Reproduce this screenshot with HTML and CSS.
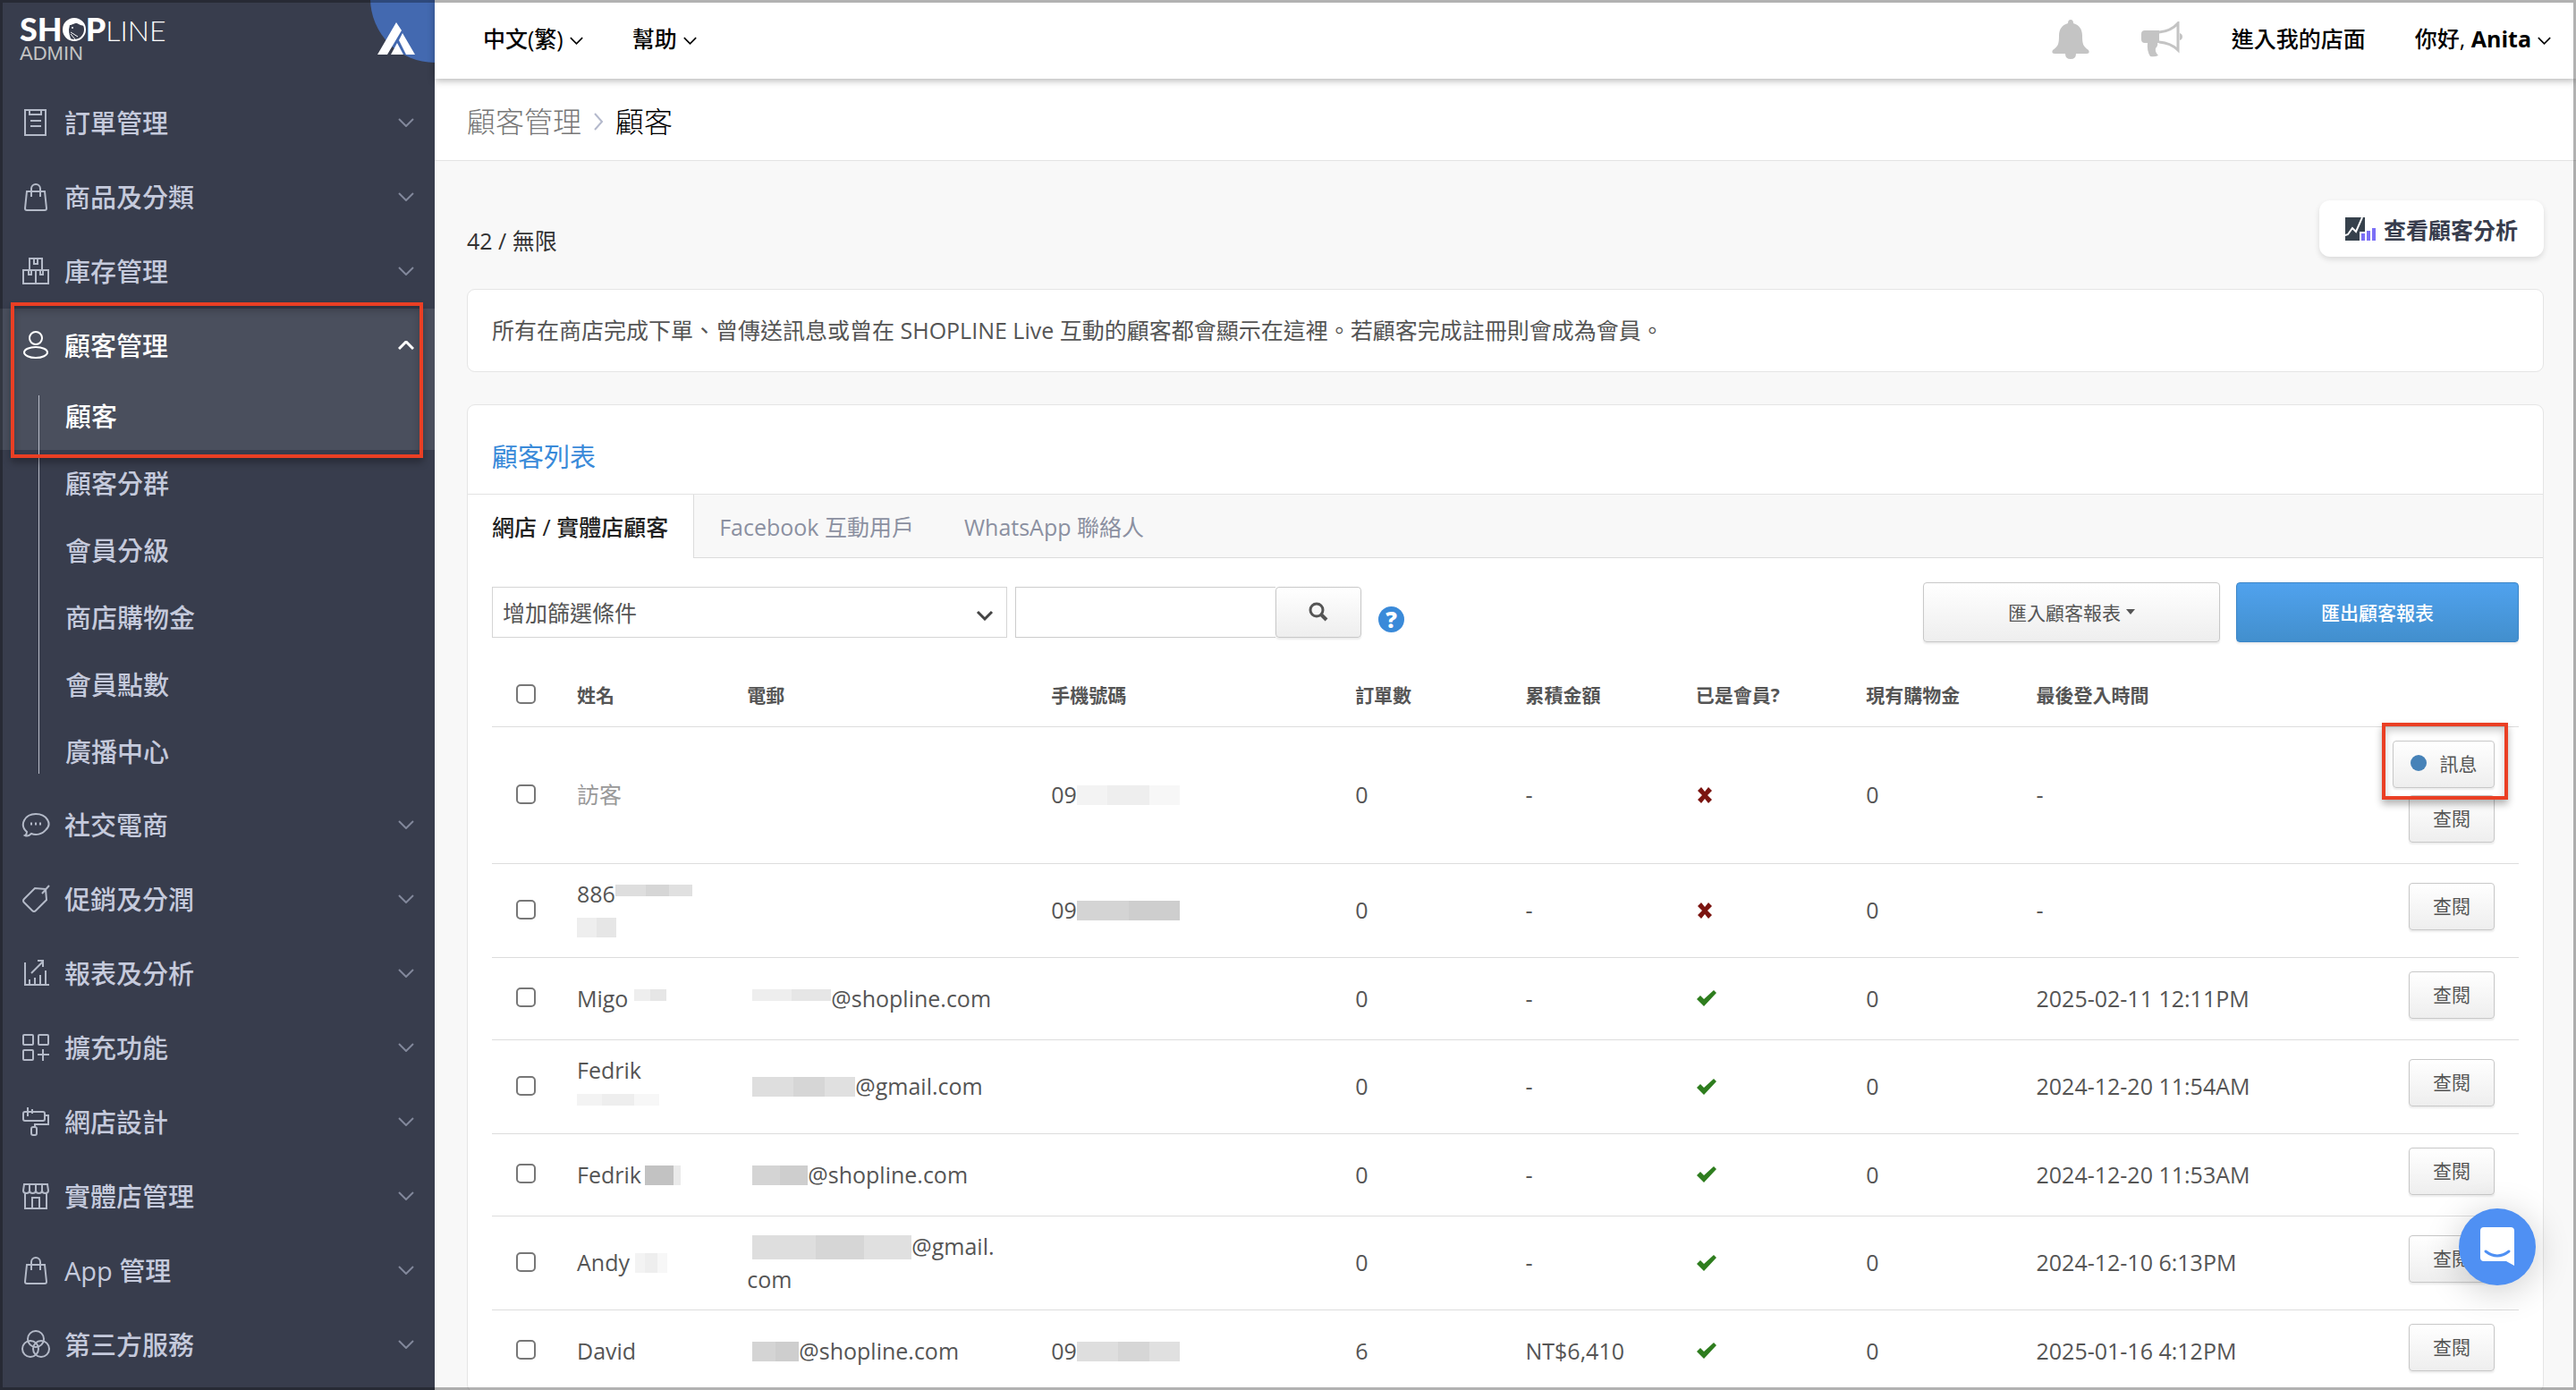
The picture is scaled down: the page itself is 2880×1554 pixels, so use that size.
FILE: index.html
```html
<!DOCTYPE html>
<html lang="zh-Hant">
<head>
  <meta charset="UTF-8" />
  <meta name="viewport" content="width=device-width, initial-scale=1.0"/>
  <title>SHOPLINE Admin - 顧客</title>
  <link rel="stylesheet" href="styles.css">
</head>
<body>
  <svg class="sprite" aria-hidden="true">
    <symbol id="down" viewBox="0 0 18 10"><path d="M1 1l8 8 8-8" fill="none" stroke="currentColor" stroke-width="2"/></symbol>
    <symbol id="up" viewBox="0 0 18 10"><path d="M1 9l8-8 8 8" fill="none" stroke="currentColor" stroke-width="3"/></symbol>
    <symbol id="bag" viewBox="0 0 32 32"><path d="M6 10h20l2 19a2 2 0 0 1-2 2H6a2 2 0 0 1-2-2zM11 16V7a5 5 0 0 1 10 0v9"/></symbol>
    <symbol id="check" viewBox="0 0 24 20"><path d="M1 11l4-4 4 4L20 1l3 3L9 19z" fill="currentColor"/></symbol>
    <symbol id="cross" viewBox="0 0 20 20"><path d="M2 5l4-4 4 5 4-5 4 4-5 5 5 5-4 4-4-5-4 5-4-4 5-5z" fill="currentColor"/></symbol>
  </svg>

  <div class="app">
    <aside class="sidebar">
      <div class="brand">
        <div class="logo">
          <div class="logo-name">
            <b>SH</b>
            <svg class="logo-o" viewBox="0 0 26 26"><circle cx="13" cy="13" r="12" fill="none" stroke="#fff" stroke-width="2"/><path d="M13 1C5 1 1 7 1 13s4 11 9 12c-2-4-3-8-3-12l1-5c3 0 4-2 8-2l4 2 4 1C22 4 18 1 13 1z" fill="#fff"/><path d="M9 16l8 5M9 18l5 6" stroke="#fff"/><circle cx="11" cy="11" r="1" fill="#fff"/></svg>
            <b>P</b><span>LINE</span>
          </div>
          <div class="logo-sub">ADMIN</div>
        </div>
        <div class="badge">
          <svg viewBox="0 0 42 36"><path d="M21 0l6 9L11 36H0zM28 12l14 24H32l-8-16zM22 23l7 13H15z" fill="#fff"/></svg>
        </div>
      </div>

      <nav>
        <a class="item" href="#"><svg class="icon" viewBox="0 0 32 32"><path d="M4 2h23v28H4zM9 2v5h13V2M10 14h12M10 20h12"/></svg>訂單管理<svg class="arrow"><use href="#down"/></svg></a>
        <a class="item" href="#"><svg class="icon"><use href="#bag"/></svg>商品及分類<svg class="arrow"><use href="#down"/></svg></a>
        <a class="item" href="#"><svg class="icon" viewBox="0 0 32 32"><path d="M9 15V2h14v13M2 15h28v15H2zM16 15v15M14 3v5h4V3M8 16v4h3v-4M21 16v4h3v-4"/></svg>庫存管理<svg class="arrow"><use href="#down"/></svg></a>

        <div class="group">
          <a class="item active" href="#"><svg class="icon" viewBox="0 0 32 32"><circle cx="16" cy="8" r="7"/><ellipse cx="16" cy="24" rx="13" ry="6"/></svg>顧客管理<svg class="arrow"><use href="#up"/></svg></a>
          <div class="sub">
            <a class="active" href="#">顧客</a>
            <a href="#">顧客分群</a>
            <a href="#">會員分級</a>
            <a href="#">商店購物金</a>
            <a href="#">會員點數</a>
            <a href="#">廣播中心</a>
          </div>
          <div class="highlight highlight-menu"></div>
        </div>

        <a class="item" href="#"><svg class="icon" viewBox="0 0 32 32"><path d="M6 24C-3 16 4 4 16 4s19 11 11 18c-4 5-11 6-16 4-2 2-5 3-7 2 2-1 2-3 2-4z"/><path d="M10 15h2M15 15h2M20 15h2" stroke-width="3"/></svg>社交電商<svg class="arrow"><use href="#down"/></svg></a>
        <a class="item" href="#"><svg class="icon" viewBox="0 0 32 32"><path d="M27 5L15 4 3 16q-2 2 0 4l9 9q2 2 4 0l12-12-1-12M31 1l-8 9"/></svg>促銷及分潤<svg class="arrow"><use href="#down"/></svg></a>
        <a class="item" href="#"><svg class="icon" viewBox="0 0 32 32"><path d="M4 4v25h27M9 29v-6M15 29v-8M21 29V18M27 29V13M11 16L24 3M18 2h6v7"/></svg>報表及分析<svg class="arrow"><use href="#down"/></svg></a>
        <a class="item" href="#"><svg class="icon" viewBox="0 0 32 32"><rect x="2" y="2" width="11" height="11" rx="1"/><rect x="19" y="2" width="11" height="11" rx="1"/><rect x="2" y="19" width="11" height="11" rx="1"/><path d="M18 24h13M24 18v13"/></svg>擴充功能<svg class="arrow"><use href="#down"/></svg></a>
        <a class="item" href="#"><svg class="icon" viewBox="0 0 32 32"><rect x="2" y="5" width="24" height="10" rx="2"/><path d="M7 0v10M12 2v5M26 9h4v10H15v3"/><rect x="11" y="22" width="6" height="9" rx="2"/></svg>網店設計<svg class="arrow"><use href="#down"/></svg></a>
        <a class="item" href="#"><svg class="icon" viewBox="0 0 32 32"><path d="M3 3h26l1 7c0 4-7 4-7 0 0 4-7 4-7 0 0 4-7 4-7 0 0 4-7 4-7 0zM9 3v7M16 3v7M23 3v7M4 13v17h24V13M12 30V18h8v12"/></svg>實體店管理<svg class="arrow"><use href="#down"/></svg></a>
        <a class="item" href="#"><svg class="icon"><use href="#bag"/></svg>App 管理<svg class="arrow"><use href="#down"/></svg></a>
        <a class="item" href="#"><svg class="icon" viewBox="0 0 32 32"><circle cx="16" cy="10" r="9"/><circle cx="10" cy="21" r="9"/><circle cx="22" cy="21" r="9"/></svg>第三方服務<svg class="arrow"><use href="#down"/></svg></a>
      </nav>
    </aside>

    <main class="main">
      <header class="topbar">
        <a href="#">中文(繁)<svg class="caret"><use href="#down"/></svg></a>
        <a href="#">幫助<svg class="caret"><use href="#down"/></svg></a>
        <div class="spacer"></div>
        <a class="bell" href="#" aria-label="通知"><svg width="42" height="44" viewBox="0 0 42 44"><path d="M18 4q0-4 3-4t3 4c7 2 10 7 10 14 0 9 1 12 7 16q2 4-2 4H3q-4 0-2-4c6-4 7-7 7-16 0-7 3-12 10-14z"/><path d="M15 38h12q0 6-6 6t-6-6"/></svg></a>
        <a class="horn" href="#" aria-label="公告"><svg width="46" height="40" viewBox="0 0 46 40"><path d="M20 10H4q-4 0-4 4v6q0 4 4 4h3q-1 9 3 15 5 1 9-1-4-4-3-8 3-3 2-6h2z"/><path d="M20 12q13-1 21-10v30q-8-8-21-9" fill="none" stroke="#c4c4c4" stroke-width="3"/><path d="M43 13q3 1 3 4t-3 4z"/></svg></a>
        <a href="#">進入我的店面</a>
        <a href="#">你好, <b>Anita</b><svg class="caret"><use href="#down"/></svg></a>
      </header>

      <div class="breadcrumb">
        <a href="#">顧客管理</a>
        <svg width="12" height="20" viewBox="0 0 12 20"><path d="M2 1l8 9-8 9" fill="none" stroke="#b4b9cc" stroke-width="2"/></svg>
        <span>顧客</span>
      </div>

      <div class="content">
        <div class="summary">
          <div class="count">42 / 無限</div>
          <button class="analysis">
            <svg width="34" height="26" viewBox="0 0 34 26"><path d="M0 0h22v16h-6v10H0z" fill="#36414c"/><path d="M0 20l3-1 5-7 4 4 7-16" fill="none" stroke="#fff" stroke-width="2"/><path d="M18 18h4v8h-4zM24 15h4v11h-4zM30 12h4v14h-4z" fill="#7b6ff6"/></svg>
            查看顧客分析
          </button>
        </div>

        <div class="notice">所有在商店完成下單、曾傳送訊息或曾在 SHOPLINE Live 互動的顧客都會顯示在這裡。若顧客完成註冊則會成為會員。</div>

        <section class="card">
          <h2>顧客列表</h2>
          <div class="tabs">
            <a class="active" href="#">網店 / 實體店顧客</a>
            <a href="#">Facebook 互動用戶</a>
            <a href="#">WhatsApp 聯絡人</a>
          </div>

          <div class="toolbar">
            <div class="select-wrap">
              <select aria-label="增加篩選條件"><option>增加篩選條件</option></select>
              <svg width="20" height="12" viewBox="0 0 20 12"><path d="M2 2l8 8 8-8" fill="none" stroke="#444" stroke-width="3"/></svg>
            </div>
            <input class="search" type="text" aria-label="搜尋">
            <button class="btn search-btn" aria-label="搜尋"><svg width="22" height="22" viewBox="0 0 22 22"><circle cx="9" cy="9" r="7" fill="none" stroke="#555" stroke-width="3"/><path d="M14 14l6 6" stroke="#555" stroke-width="4"/></svg></button>
            <a class="help" href="#">?</a>
            <div class="spacer"></div>
            <button class="btn import">匯入顧客報表<i class="tri"></i></button>
            <button class="btn primary">匯出顧客報表</button>
          </div>

          <table>
            <colgroup>
              <col class="c-check"><col class="c-s"><col class="c-l"><col class="c-l"><col class="c-s"><col class="c-s"><col class="c-s"><col class="c-s"><col><col class="c-action">
            </colgroup>
            <thead>
              <tr>
                <th><input type="checkbox" aria-label="全選"></th>
                <th>姓名</th><th>電郵</th><th>手機號碼</th><th>訂單數</th><th>累積金額</th><th>已是會員?</th><th>現有購物金</th><th>最後登入時間</th><th></th>
              </tr>
            </thead>
            <tbody>
              <tr>
                <td><input type="checkbox" aria-label="選取"></td>
                <td class="guest">訪客</td>
                <td></td>
                <td>09<i class="mask w115 faint"></i></td>
                <td>0</td><td>-</td>
                <td><svg class="no"><use href="#cross"/></svg></td>
                <td>0</td><td>-</td>
                <td class="actions">
                  <div class="msg"><button class="btn small"><i class="dot"></i>訊息</button><div class="highlight highlight-msg"></div></div>
                  <button class="btn small">查閱</button>
                </td>
              </tr>
              <tr>
                <td><input type="checkbox" aria-label="選取"></td>
                <td>886<i class="mask w86 thin"></i><br><i class="mask w44 light"></i></td>
                <td></td>
                <td>09<i class="mask w115 dark"></i></td>
                <td>0</td><td>-</td>
                <td><svg class="no"><use href="#cross"/></svg></td>
                <td>0</td><td>-</td>
                <td class="actions"><button class="btn small">查閱</button></td>
              </tr>
              <tr>
                <td><input type="checkbox" aria-label="選取"></td>
                <td>Migo <i class="mask w36 thin light"></i></td>
                <td class="mail"><i class="mask w88 thin light"></i>@shopline.com</td>
                <td></td>
                <td>0</td><td>-</td>
                <td><svg class="yes"><use href="#check"/></svg></td>
                <td>0</td><td>2025-02-11 12:11PM</td>
                <td class="actions"><button class="btn small">查閱</button></td>
              </tr>
              <tr>
                <td><input type="checkbox" aria-label="選取"></td>
                <td>Fedrik<br><i class="mask w92 thin faint"></i></td>
                <td class="mail"><i class="mask w115"></i>@gmail.com</td>
                <td></td>
                <td>0</td><td>-</td>
                <td><svg class="yes"><use href="#check"/></svg></td>
                <td>0</td><td>2024-12-20 11:54AM</td>
                <td class="actions"><button class="btn small">查閱</button></td>
              </tr>
              <tr>
                <td><input type="checkbox" aria-label="選取"></td>
                <td>Fedrik<i class="mask w40 gap darker"></i></td>
                <td class="mail"><i class="mask w62 dark"></i>@shopline.com</td>
                <td></td>
                <td>0</td><td>-</td>
                <td><svg class="yes"><use href="#check"/></svg></td>
                <td>0</td><td>2024-12-20 11:53AM</td>
                <td class="actions"><button class="btn small">查閱</button></td>
              </tr>
              <tr>
                <td><input type="checkbox" aria-label="選取"></td>
                <td>Andy <i class="mask w36 faint"></i></td>
                <td class="mail"><i class="mask w178 tall"></i>@gmail.<br>com</td>
                <td></td>
                <td>0</td><td>-</td>
                <td><svg class="yes"><use href="#check"/></svg></td>
                <td>0</td><td>2024-12-10 6:13PM</td>
                <td class="actions"><button class="btn small">查閱</button></td>
              </tr>
              <tr>
                <td><input type="checkbox" aria-label="選取"></td>
                <td>David</td>
                <td class="mail"><i class="mask w52 dark"></i>@shopline.com</td>
                <td>09<i class="mask w115"></i></td>
                <td>6</td><td>NT$6,410</td>
                <td><svg class="yes"><use href="#check"/></svg></td>
                <td>0</td><td>2025-01-16 4:12PM</td>
                <td class="actions"><button class="btn small">查閱</button></td>
              </tr>
            </tbody>
          </table>
        </section>
      </div>
    </main>
  </div>

  <button class="chat" aria-label="客服"><svg width="40" height="44" viewBox="0 0 40 44"><path d="M5 0h30q4 0 4 4v39l-9-5H5q-4 0-4-4V4q0-4 4-4z" fill="#fff"/><path d="M7 27q13 10 26 0" fill="none" stroke="#4f90f3" stroke-width="3" stroke-linecap="round"/></svg></button>
  <div class="frame"></div>
</body>
</html>
```

FILE: styles.css
```css
* {
  box-sizing: border-box;
}

body {
  margin: 0;
  font-family: "Open Sans", "Noto Sans CJK TC", sans-serif;
  font-size: 25px;
  line-height: 37px;
  color: #555;
  background: #f8f8f8;
  overflow: hidden;
}

a {
  color: inherit;
  text-decoration: none;
}

button,
input,
select {
  font-family: inherit;
  color: inherit;
}

.sprite {
  display: none;
}

.spacer {
  flex: 1;
}

.app {
  display: flex;
  height: 100vh;
  overflow: hidden;
}

/* sidebar */
.sidebar {
  flex: 0 0 486px;
  background: #383d4d;
  color: #c5cadc;
  overflow: hidden;
}

.brand {
  position: relative;
  height: 96px;
  padding: 14px 22px;
  overflow: hidden;
}

.logo-name {
  display: flex;
  align-items: baseline;
  height: 36px;
  color: #fff;
  font-family: Lato, sans-serif;
  font-size: 36px;
  line-height: 36px;
}

.logo-name b {
  font-weight: 900;
}

.logo-name span {
  font-size: 32px;
  font-weight: 300;
}

.logo-o {
  width: 26px;
  height: 26px;
}

.logo-sub {
  font-family: "Liberation Sans", sans-serif;
  font-size: 22px;
  line-height: 20px;
  color: #c4c4c4;
}

.badge {
  position: absolute;
  top: -74px;
  right: -72px;
  width: 144px;
  height: 144px;
  border-radius: 50%;
  background: #4369b0;
}

.badge svg {
  position: absolute;
  left: 8px;
  top: 99px;
  width: 42px;
  height: 36px;
}

.item {
  display: flex;
  align-items: center;
  height: 83px;
  padding: 0 23px 1px 24px;
  font-size: 29px;
  font-weight: 500;
}

.icon {
  width: 32px;
  height: 32px;
  margin-right: 16px;
  fill: none;
  stroke: #b4bac8;
  stroke-width: 2;
}

.arrow {
  width: 18px;
  height: 10px;
  margin-left: auto;
  color: #82889b;
}

.group {
  position: relative;
  padding-bottom: 3px;
}

.item.active,
.sub a.active {
  background: #4a4f5d;
  color: #fff;
}

.active .icon {
  stroke: #fff;
}

.active .arrow {
  color: #fff;
}

.sub {
  position: relative;
}

.sub::before {
  content: "";
  position: absolute;
  left: 43px;
  top: 14px;
  bottom: 13px;
  width: 1px;
  background: #b9bdc9;
}

.sub a {
  display: flex;
  align-items: center;
  height: 75px;
  padding-left: 73px;
  font-size: 29px;
  font-weight: 500;
}

.highlight {
  position: absolute;
  z-index: 1;
  border: 4px solid #ea3f24;
  box-shadow: 0 5px 8px rgba(0, 0, 0, 0.3), inset 0 5px 8px rgba(0, 0, 0, 0.2);
  pointer-events: none;
}

.highlight-menu {
  left: 12px;
  right: 13px;
  top: -7px;
  height: 174px;
}

/* main */
.main {
  flex: 1;
  min-width: 0;
  display: flex;
  flex-direction: column;
}

.topbar {
  position: relative;
  z-index: 1;
  display: flex;
  align-items: center;
  height: 88px;
  padding: 0 28px 1px 54px;
  background: #fff;
  color: #000;
  font-weight: 500;
  box-shadow: 0 2px 8px rgba(0, 0, 0, 0.3);
}

.topbar a {
  white-space: nowrap;
  margin-right: 55px;
}

.topbar a:last-child {
  margin-right: 0;
}

.topbar .bell,
.topbar .horn {
  display: flex;
  fill: #c4c4c4;
}

.topbar .bell {
  margin-right: 58px;
}

.caret {
  width: 15px;
  height: 9px;
  margin-left: 7px;
  vertical-align: 3px;
}

.breadcrumb {
  display: flex;
  align-items: center;
  gap: 13px;
  height: 92px;
  padding: 4px 0 0 36px;
  background: #fff;
  border-bottom: 1px solid #e3e3e3;
  font-size: 32px;
  font-weight: 300;
  color: #000;
}

.breadcrumb a {
  color: #777;
}

.content {
  flex: 1;
  min-height: 0;
  padding: 44px 36px 0;
}

.summary {
  display: flex;
  justify-content: space-between;
  height: 99px;
}

.count {
  margin-top: 27px;
  color: #333;
}

.analysis {
  display: flex;
  align-items: center;
  gap: 9px;
  height: 63px;
  padding: 0 29px;
  border: none;
  border-radius: 12px;
  background: #fff;
  box-shadow: 0 3px 6px rgba(0, 0, 0, 0.12);
  font-size: 25px;
  font-weight: 700;
  color: #383d4d;
}

.notice {
  padding: 27px;
  margin-bottom: 36px;
  border: 1px solid #e5e5e5;
  border-radius: 9px;
  background: #fff;
}

.card {
  border: 1px solid #e5e5e5;
  border-radius: 9px;
  background: #fff;
}

.card h2 {
  margin: 0;
  padding: 38px 27px 21px;
  font-size: 29px;
  font-weight: 400;
  line-height: 40px;
  color: #3a8ad9;
}

.tabs {
  display: flex;
  height: 72px;
  border-top: 1px solid #e3e3e3;
  border-bottom: 1px solid #dcdcdc;
  background: #f8f8f8;
  color: #8b90a1;
}

.tabs a {
  padding: 18px 28px;
}

.tabs a.active {
  margin-bottom: -1px;
  padding-left: 27px;
  border-right: 1px solid #dcdcdc;
  background: #fff;
  color: #222;
  font-weight: 500;
}

.toolbar {
  display: flex;
  align-items: flex-start;
  padding: 27px 27px 0;
}

.select-wrap {
  position: relative;
  width: 576px;
  margin: 5px 9px 0 0;
}

.select-wrap svg {
  position: absolute;
  right: 15px;
  top: 26px;
  pointer-events: none;
}

.select-wrap select {
  width: 100%;
  height: 57px;
  padding: 0 11px;
  border: 1px solid #d5d5d5;
  border-radius: 0;
  background: #fff;
  font-size: 25px;
  appearance: none;
}

.search {
  width: 291px;
  height: 57px;
  margin-top: 5px;
  border: 1px solid #ccc;
  border-right: none;
}

.btn {
  display: inline-flex;
  align-items: center;
  justify-content: center;
  padding-bottom: 3px;
  border: 1px solid #c8c8c8;
  border-radius: 4px;
  background: linear-gradient(#fff, #eee);
  box-shadow: 0 2px 2px rgba(0, 0, 0, 0.08);
  font-size: 21px;
}

.search-btn {
  width: 96px;
  height: 57px;
  margin-top: 5px;
}

.help {
  width: 29px;
  height: 29px;
  margin: 27px 0 0 19px;
  border-radius: 50%;
  background: #3a8ad9;
  color: #fff;
  font-weight: 800;
  line-height: 29px;
  text-align: center;
}

.import,
.primary {
  height: 67px;
}

.import {
  width: 332px;
  margin-right: 18px;
}

.primary {
  width: 316px;
  border-color: #3a85c8;
  background: linear-gradient(#50a2ee, #428fcd);
  color: #fff;
  font-weight: 500;
}

.tri {
  margin-left: 6px;
  border: 5px solid transparent;
  border-top: 6px solid #555;
  border-bottom: 0;
}

table {
  width: calc(100% - 54px);
  margin: 25px 27px 0;
  border-collapse: collapse;
  table-layout: fixed;
}

.c-check {
  width: 80px;
}

.c-s {
  width: 8.4%;
}

.c-l {
  width: 15%;
}

.c-action {
  width: 214px;
}

th {
  height: 69px;
  padding: 0 15px;
  font-size: 21px;
  font-weight: 700;
  text-align: left;
}

td {
  padding: 15px;
  border-top: 1px solid #ddd;
  vertical-align: middle;
}

th:first-child,
td:first-child {
  padding: 0 0 2px 27px;
}

td input,
th input {
  display: block;
  width: 22px;
  height: 22px;
  margin: 0;
  border: 2px solid #777;
  border-radius: 5px;
  background: #fff;
  appearance: none;
}

.guest {
  color: #999;
}

.yes {
  display: block;
  width: 24px;
  height: 20px;
  color: #2e7d1e;
}

.no {
  display: block;
  width: 20px;
  height: 20px;
  color: #7b1410;
}

.actions {
  padding-right: 27px;
}

.actions .btn {
  display: flex;
  margin: 0 0 8px auto;
}

.small {
  height: 53px;
  padding: 0 26px 3px;
}

.msg {
  position: relative;
  width: 114px;
  margin-left: auto;
}

.msg .btn {
  width: 114px;
  padding: 0 0 2px;
}

.dot {
  width: 18px;
  height: 18px;
  margin-right: 15px;
  border-radius: 50%;
  background: #4682b8;
}

.highlight-msg {
  left: -12px;
  right: -15px;
  top: -20px;
  height: 86px;
}

/* blurred-out personal data */
.mask {
  display: inline-block;
  width: 36px;
  height: 22px;
  background: linear-gradient(90deg, #dedede 40%, #d6d6d6 40%, #d6d6d6 70%, #e0e0e0 70%);
  vertical-align: -2px;
}

.mask.thin {
  height: 13px;
  vertical-align: 7px;
}

.mask.tall {
  height: 27px;
  vertical-align: -5px;
}

.mask.light {
  background: linear-gradient(90deg, #eee 50%, #e6e6e6 50%);
}

.mask.faint {
  background: linear-gradient(90deg, #f3f3f3 30%, #eee 30%, #eee 70%, #f7f7f7 70%);
}

.mask.dark {
  background: linear-gradient(90deg, #d4d4d4 50%, #cecece 50%);
}

.mask.darker {
  background: linear-gradient(90deg, #c2c2c2 80%, #eaeaea 80%);
}

.mask.gap {
  margin-left: 4px;
}

.mail .mask {
  margin-left: 6px;
}

.w40 { width: 40px; }
.w44 { width: 44px; }
.w52 { width: 52px; }
.w62 { width: 62px; }
.w86 { width: 86px; }
.w88 { width: 88px; }
.w92 { width: 92px; }
.w115 { width: 115px; }
.w178 { width: 178px; }

.chat {
  position: fixed;
  right: 45px;
  bottom: 117px;
  z-index: 2;
  display: flex;
  align-items: center;
  justify-content: center;
  width: 86px;
  height: 86px;
  padding: 0;
  border: none;
  border-radius: 50%;
  background: #4f90f3;
  box-shadow: 0 6px 40px rgba(0, 0, 0, 0.2);
}

.frame {
  position: fixed;
  inset: 0;
  z-index: 3;
  border: 3px solid rgba(0, 0, 0, 0.3);
  pointer-events: none;
}
```
